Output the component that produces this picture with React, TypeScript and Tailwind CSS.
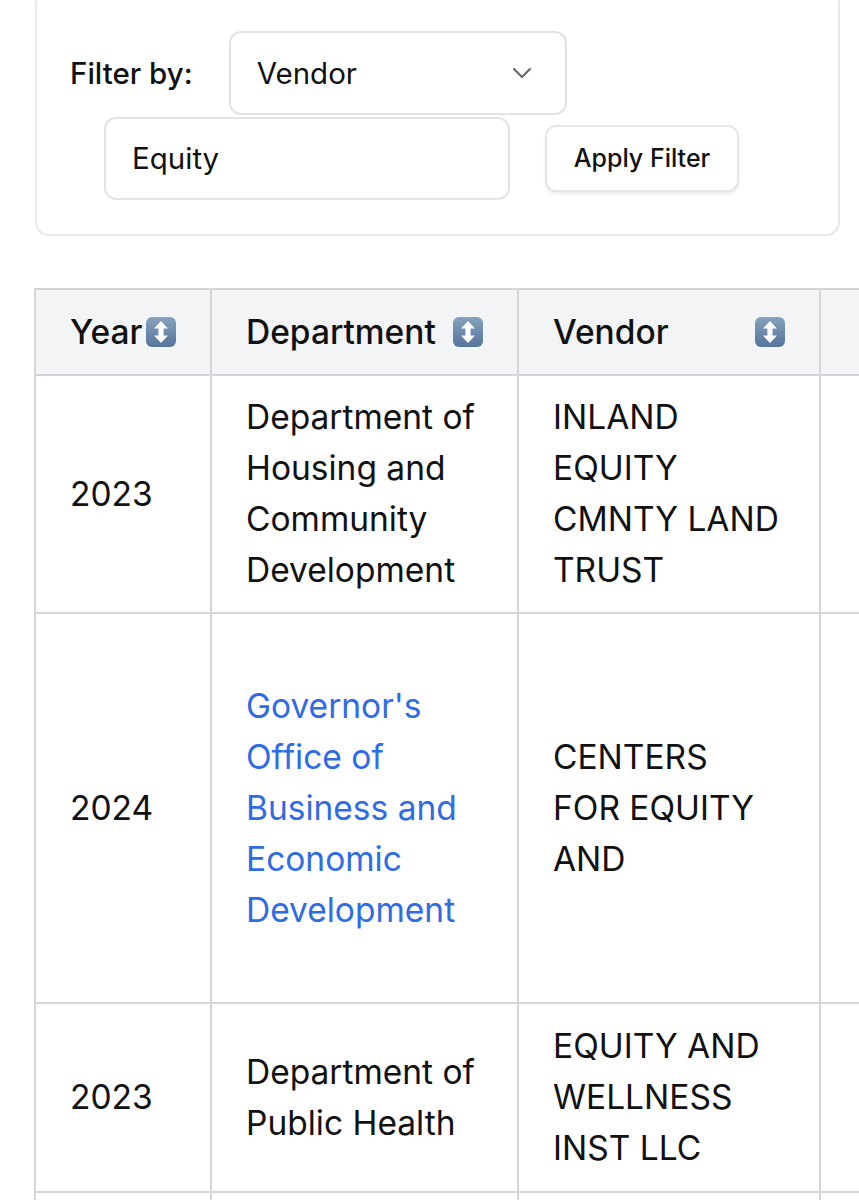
import React from "react";

type Row = {
  year: string;
  department: string[];
  vendor: string[];
  link?: boolean;
  h: string;
};

const rows: Row[] = [
  {
    year: "2023",
    department: ["Department of", "Housing and", "Community", "Development"],
    vendor: ["INLAND", "EQUITY", "CMNTY LAND", "TRUST"],
    h: "h-[238px]",
  },
  {
    year: "2024",
    department: ["Governor's", "Office of", "Business and", "Economic", "Development"],
    vendor: ["CENTERS", "FOR EQUITY", "AND"],
    link: true,
    h: "h-[390px]",
  },
  {
    year: "2023",
    department: ["Department of", "Public Health"],
    vendor: ["EQUITY AND", "WELLNESS", "INST LLC"],
    h: "h-[189px]",
  },
  {
    year: "2024",
    department: ["Department of"],
    vendor: ["EQUITY"],
    h: "h-[189px]",
  },
];

function SortIcon() {
  return (
    <svg width="32" height="32" viewBox="0 0 32 32" className="shrink-0">
      <defs>
        <linearGradient id="sortbg" x1="0" y1="0" x2="0" y2="1">
          <stop offset="0" stopColor="#86a2bf" />
          <stop offset="1" stopColor="#56739a" />
        </linearGradient>
      </defs>
      <rect x="1" y="1" width="30" height="30" rx="6" fill="url(#sortbg)" />
      <path d="M16 5 L23 12.5 H18.6 V19.5 H23 L16 27 L9 19.5 H13.4 V12.5 H9 Z" fill="#fff" />
    </svg>
  );
}

function Chevron() {
  return (
    <svg width="22" height="14" viewBox="0 0 22 14" fill="none">
      <path d="M3 3 L11 11 L19 3" stroke="#6b6b6b" strokeWidth="2.2" strokeLinecap="round" strokeLinejoin="round" />
    </svg>
  );
}

export default function App() {
  return (
    <div className="min-h-[1200px] overflow-hidden bg-white text-[#111] font-['Inter',sans-serif]">
      <div className="ml-[35px] mr-[19px] -mt-[10px] rounded-[14px] border-2 border-[#e8e8ea] pt-[39px] pb-[34px]">
        <div className="flex items-center">
          <span className="ml-[33px] text-[29.5px] font-medium">Filter by:</span>
          <div className="ml-[36px] flex h-[84px] w-[338px] items-center justify-between rounded-[12px] border-2 border-[#e3e3e6] pl-[26px] pr-[32px] text-[29.5px]">
            <span>Vendor</span>
            <Chevron />
          </div>
        </div>
        <div className="mt-[2px] flex items-center">
          <div className="ml-[67px] flex h-[83px] w-[406px] items-center rounded-[12px] border-2 border-[#e3e3e6] pl-[26px] text-[29.5px]">
            Equity
          </div>
          <button className="ml-[35px] h-[67px] w-[194px] rounded-[11px] border-2 border-[#e6e6e9] bg-white text-[25px] font-medium shadow-[0_2px_3px_rgba(0,0,0,0.08)]">
            Apply Filter
          </button>
        </div>
      </div>

      <div className="ml-[34px] mt-[52px] overflow-hidden">
        <table className="w-[1090px] table-fixed border-collapse text-[33.5px] leading-[51px]">
          <colgroup>
            <col className="w-[176px]" />
            <col className="w-[307px]" />
            <col className="w-[302px]" />
            <col className="w-[305px]" />
          </colgroup>
          <thead>
            <tr className="h-[86px] bg-[#f3f4f6]">
              {["Year", "Department", "Vendor"].map((t) => (
                <th key={t} className="border-2 border-[#d6d6da] pl-[34px] pr-[33px] text-left font-medium">
                  <div className="flex items-center justify-between">
                    <span>{t}</span>
                    <SortIcon />
                  </div>
                </th>
              ))}
              <th className="border-2 border-[#d6d6da]" />
            </tr>
          </thead>
          <tbody>
            {rows.map((r, i) => (
              <tr key={i} className={r.h}>
                <td className="border-2 border-[#d6d6da] px-[34px] align-middle">{r.year}</td>
                <td className={`border-2 border-[#d6d6da] px-[34px] align-middle ${r.link ? "text-[#2f6be3]" : ""}`}>
                  {r.department.map((l) => (
                    <div key={l}>{l}</div>
                  ))}
                </td>
                <td className="border-2 border-[#d6d6da] px-[34px] align-middle">
                  {r.vendor.map((l) => (
                    <div key={l}>{l}</div>
                  ))}
                </td>
                <td className="border-2 border-[#d6d6da]" />
              </tr>
            ))}
          </tbody>
        </table>
      </div>
    </div>
  );
}
